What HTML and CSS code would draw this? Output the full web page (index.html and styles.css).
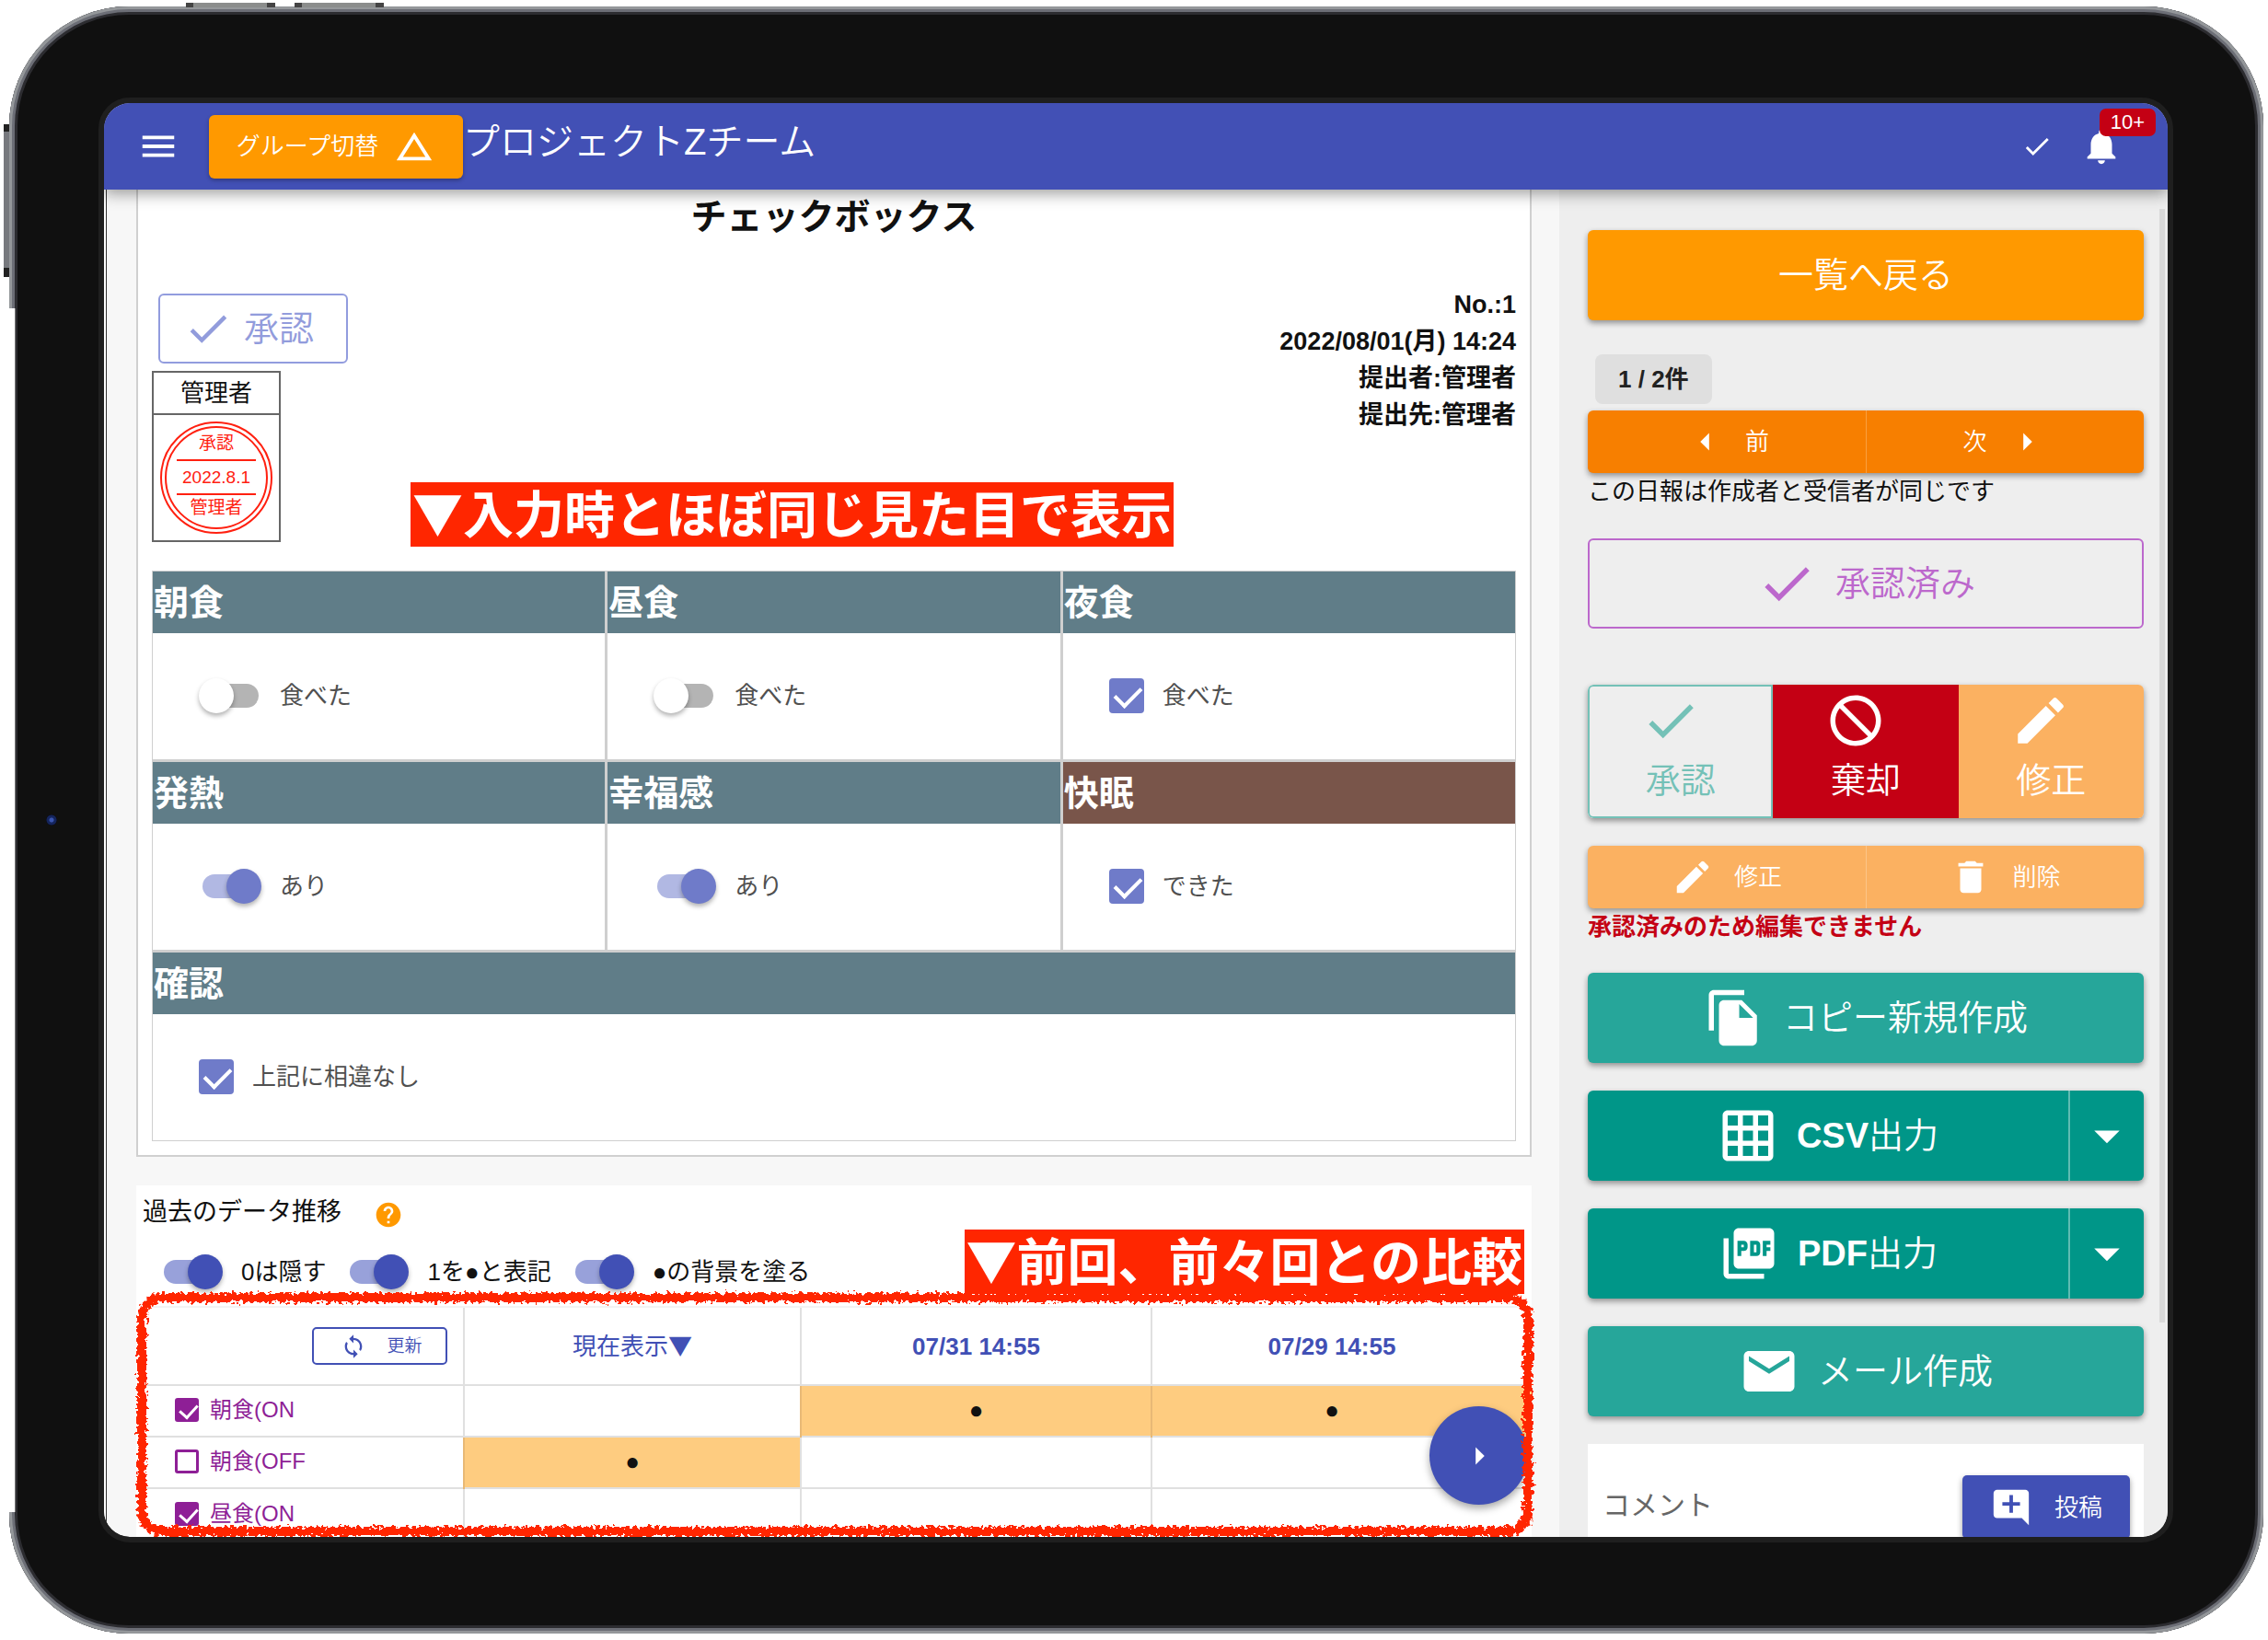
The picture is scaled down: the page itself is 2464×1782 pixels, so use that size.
FILE: index.html
```html
<!DOCTYPE html>
<html lang="ja">
<head>
<meta charset="utf-8">
<title>プロジェクトZチーム</title>
<link rel="stylesheet" href="styles.css">
</head>
<body>
<svg class="defs" width="0" height="0" aria-hidden="true">
  <symbol id="check" viewBox="0 0 24 24"><path d="M9 16.17L4.83 12l-1.42 1.41L9 19 21 7l-1.41-1.41z"/></symbol>
  <symbol id="pencil" viewBox="0 0 24 24"><path d="M3 17.25V21h3.75L17.81 9.94l-3.75-3.75L3 17.25zM20.71 7.04a1 1 0 0 0 0-1.41l-2.34-2.34a1 1 0 0 0-1.41 0l-1.83 1.83 3.75 3.75 1.83-1.83z"/></symbol>
  <symbol id="right" viewBox="0 0 24 24"><path d="M10 17l5-5-5-5z"/></symbol>
  <symbol id="left" viewBox="0 0 24 24"><path d="M14 7l-5 5 5 5z"/></symbol>
  <symbol id="down" viewBox="0 0 24 24"><path d="M7 10l5 5 5-5z"/></symbol>
</svg>
<div class="device">
  <span class="key key-top-a"></span><span class="key key-top-b"></span><span class="key key-side"></span>
  <span class="edge"></span><span class="camera"></span>
  <div class="screen">
    <header class="bar">
      <button class="icon-btn menu" aria-label="メニュー"><svg class="i46" viewBox="0 0 24 24"><path d="M3 18h18v-2H3v2zm0-5h18v-2H3v2zm0-7v2h18V6H3z"/></svg></button>
      <button class="group-btn">グループ切替<svg class="i46" viewBox="0 0 24 24"><path d="M12 7.77L18.39 18H5.61L12 7.77M12 4L2 20h20L12 4z"/></svg></button>
      <h1 class="team">プロジェクトZチーム</h1>
      <button class="icon-btn" aria-label="確認"><svg class="i34" viewBox="0 0 24 24"><use href="#check"/></svg></button>
      <button class="icon-btn bell" aria-label="通知"><svg class="i46" viewBox="0 0 24 24"><path d="M12 22c1.100 0 2-.9 2-2h-4c0 1.100.9 2 2 2zm6-6v-5c0-3.070-1.640-5.640-4.500-6.320V4c0-.83-.67-1.500-1.500-1.500s-1.500.67-1.500 1.500v.68C7.630 5.360 6 7.920 6 11v5l-2 2v1h16v-1l-2-2z"/></svg><span class="badge">10+</span></button>
    </header>
    <div class="content">
      <main class="main">
        <section class="sheet">
          <h2 class="sheet-title">チェックボックス</h2>
          <div class="sheet-head">
            <div class="approval">
              <button class="approve-btn"><svg class="i54" viewBox="0 0 24 24"><use href="#check"/></svg>承認</button>
              <div class="stamp-box">
                <div class="stamp-name">管理者</div>
                <div class="stamp"><div class="stamp-inner"><span>承認</span><span class="stamp-date">2022.8.1</span><span class="stamp-by">管理者</span></div></div>
              </div>
            </div>
            <div class="meta"><div>No.:1</div><div>2022/08/01(月) 14:24</div><div>提出者:管理者</div><div>提出先:管理者</div></div>
          </div>
          <div class="callout callout-sheet">▼入力時とほぼ同じ見た目で表示</div>
          <div class="fields">
            <div class="field"><h3>朝食</h3><label><input class="switch" type="checkbox">食べた</label></div>
            <div class="field"><h3>昼食</h3><label><input class="switch" type="checkbox">食べた</label></div>
            <div class="field"><h3>夜食</h3><label><input class="tick" type="checkbox" checked>食べた</label></div>
            <div class="field"><h3>発熱</h3><label><input class="switch" type="checkbox" checked>あり</label></div>
            <div class="field"><h3>幸福感</h3><label><input class="switch" type="checkbox" checked>あり</label></div>
            <div class="field"><h3 class="brown">快眠</h3><label><input class="tick" type="checkbox" checked>できた</label></div>
            <div class="field wide"><h3>確認</h3><label><input class="tick" type="checkbox" checked>上記に相違なし</label></div>
          </div>
        </section>
        <section class="history">
          <div class="history-title"><h2>過去のデータ推移</h2><button class="icon-btn help" aria-label="ヘルプ"><svg class="i32" viewBox="0 0 24 24"><path d="M12 2C6.480 2 2 6.480 2 12s4.480 10 10 10 10-4.480 10-10S17.520 2 12 2zm1 17h-2v-2h2v2zm2.070-7.750l-.9.92C13.450 12.900 13 13.500 13 15h-2v-.5c0-1.100.45-2.100 1.170-2.830l1.240-1.260c.37-.36.59-.86.59-1.410 0-1.100-.9-2-2-2s-2 .9-2 2H8c0-2.210 1.790-4 4-4s4 1.790 4 4c0 .88-.36 1.680-.93 2.250z"/></svg></button></div>
          <div class="options">
            <label><input class="switch strong" type="checkbox" checked>0は隠す</label>
            <label><input class="switch strong" type="checkbox" checked>1を●と表記</label>
            <label><input class="switch strong" type="checkbox" checked>●の背景を塗る</label>
          </div>
          <div class="compare">
            <table>
              <colgroup><col class="c-name"><col class="c-now"><col class="c-prev"><col></colgroup>
              <thead><tr>
                <th class="refresh"><button class="refresh-btn"><svg class="i28" viewBox="0 0 24 24"><path d="M12 4V1L8 5l4 4V6c3.310 0 6 2.690 6 6 0 1.010-.25 1.970-.7 2.800l1.460 1.460C19.540 15.030 20 13.570 20 12c0-4.420-3.580-8-8-8zm0 14c-3.310 0-6-2.690-6-6 0-1.010.25-1.970.7-2.800L5.240 7.740C4.460 8.970 4 10.430 4 12c0 4.420 3.580 8 8 8v3l4-4-4-4v3z"/></svg>更新</button></th>
                <th class="now">現在表示<span class="mark">▼</span></th><th>07/31 14:55</th><th>07/29 14:55</th>
              </tr></thead>
              <tbody>
                <tr><td><label class="series"><input type="checkbox" checked>朝食(ON</label></td><td></td><td class="hit">●</td><td class="hit">●</td></tr>
                <tr><td><label class="series"><input type="checkbox">朝食(OFF</label></td><td class="hit">●</td><td></td><td></td></tr>
                <tr><td><label class="series"><input type="checkbox" checked>昼食(ON</label></td><td></td><td></td><td></td></tr>
              </tbody>
            </table>
            <button class="fab" aria-label="次へ"><svg class="i46" viewBox="0 0 24 24"><use href="#right"/></svg></button>
          </div>
          <div class="callout callout-history">▼前回、前々回との比較</div>
          <svg class="crayon" aria-hidden="true"><filter id="rough" x="-5%" y="-5%" width="110%" height="110%"><feTurbulence type="fractalNoise" baseFrequency="0.25" numOctaves="2" seed="4"/><feDisplacementMap in="SourceGraphic" scale="11" xChannelSelector="R" yChannelSelector="G"/></filter><rect x="6" y="6" rx="22" filter="url(#rough)"/></svg>
        </section>
      </main>
      <aside class="side">
        <button class="btn back">一覧へ戻る</button>
        <div class="count">1 / 2件</div>
        <div class="pair pager"><button><svg class="i46" viewBox="0 0 24 24"><use href="#left"/></svg>前</button><button>次<svg class="i46" viewBox="0 0 24 24"><use href="#right"/></svg></button></div>
        <p class="note">この日報は作成者と受信者が同じです</p>
        <button class="btn done"><svg class="i66" viewBox="0 0 24 24"><use href="#check"/></svg>承認済み</button>
        <div class="triple">
          <button class="ok"><svg class="i66" viewBox="0 0 24 24"><use href="#check"/></svg>承認</button>
          <button class="reject"><svg class="i66" viewBox="0 0 24 24"><path d="M12 2C6.480 2 2 6.480 2 12s4.480 10 10 10 10-4.480 10-10S17.520 2 12 2zM4 12c0-4.420 3.580-8 8-8 1.850 0 3.550.63 4.900 1.690L5.690 16.900C4.630 15.550 4 13.850 4 12zm8 8c-1.850 0-3.550-.63-4.900-1.690L18.310 7.100C19.370 8.450 20 10.150 20 12c0 4.420-3.580 8-8 8z" transform="matrix(-1 0 0 1 24 0)"/></svg>棄却</button>
          <button class="fix"><svg class="i66" viewBox="0 0 24 24"><use href="#pencil"/></svg>修正</button>
        </div>
        <div class="pair edit"><button><svg class="i46" viewBox="0 0 24 24"><use href="#pencil"/></svg>修正</button><button><svg class="i46" viewBox="0 0 24 24"><path d="M6 19c0 1.100.9 2 2 2h8c1.100 0 2-.9 2-2V7H6v12zM19 4h-3.500l-1-1h-5l-1 1H5v2h14V4z"/></svg>削除</button></div>
        <p class="note warn">承認済みのため編集できません</p>
        <div class="outputs">
          <button class="btn teal"><svg class="i66" viewBox="0 0 24 24"><path d="M16 1H4c-1.100 0-2 .9-2 2v14h2V3h12V1zm-1 4l6 6v10c0 1.100-.9 2-2 2H7.990C6.890 23 6 22.100 6 21l.01-14c0-1.100.89-2 1.990-2h7zm-1 7h5.500L14 6.500V12z"/></svg>コピー新規作成</button>
          <div class="split"><button class="btn"><svg class="i66" viewBox="0 0 24 24"><path d="M20 2H4c-1.100 0-2 .9-2 2v16c0 1.100.9 2 2 2h16c1.100 0 2-.9 2-2V4c0-1.100-.9-2-2-2zM8 20H4v-4h4v4zm0-6H4v-4h4v4zm0-6H4V4h4v4zm6 12h-4v-4h4v4zm0-6h-4v-4h4v4zm0-6h-4V4h4v4zm6 12h-4v-4h4v4zm0-6h-4v-4h4v4zm0-6h-4V4h4v4z"/></svg><span><b>CSV</b>出力</span></button><button class="more" aria-label="CSV出力メニュー"><svg class="i66" viewBox="0 0 24 24"><use href="#down"/></svg></button></div>
          <div class="split"><button class="btn"><svg class="i66" viewBox="0 0 24 24"><path d="M20 2H8c-1.100 0-2 .9-2 2v12c0 1.100.9 2 2 2h12c1.100 0 2-.9 2-2V4c0-1.100-.9-2-2-2zm-8.500 7.500c0 .83-.67 1.500-1.500 1.500H9v2H7.500V7H10c.83 0 1.500.67 1.500 1.500v1zm5 2c0 .83-.67 1.500-1.500 1.500h-2.500V7H15c.83 0 1.500.67 1.500 1.500v3zm4-3H19v1h1.500V11H19v2h-1.500V7h3v1.500zM9 9.500h1v-1H9v1zM4 6H2v14c0 1.100.9 2 2 2h14v-2H4V6zm10 5.500h1v-3h-1v3z"/></svg><span><b>PDF</b>出力</span></button><button class="more" aria-label="PDF出力メニュー"><svg class="i66" viewBox="0 0 24 24"><use href="#down"/></svg></button></div>
          <button class="btn teal"><svg class="i66" viewBox="0 0 24 24"><path d="M20 4H4c-1.100 0-1.990.9-1.990 2L2 18c0 1.100.9 2 2 2h16c1.100 0 2-.9 2-2V6c0-1.100-.9-2-2-2zm0 4l-8 5-8-5V6l8 5 8-5v2z"/></svg>メール作成</button>
          <div class="comment"><span>コメント</span><button class="post"><svg class="i46" viewBox="0 0 24 24"><path d="M21.990 4c0-1.100-.89-2-1.990-2H4c-1.100 0-2 .9-2 2v12c0 1.100.9 2 2 2h14l4 4-.01-18zM17 11h-4v4h-2v-4H7V9h4V5h2v4h4v2z"/></svg>投稿</button></div>
        </div>
      </aside>
      <span class="scrollbar"></span>
    </div>
  </div>
</div>
</body>
</html>
```
FILE: styles.css
```css
* { box-sizing: border-box; }
html, body { height: 100%; }
body {
  margin: 0;
  padding: 7px 5px 7px 10px;
  background: #fff;
  color: #111;
  font: 26px/40px "Liberation Sans", "Noto Sans CJK JP", sans-serif;
  overflow: hidden;
}
h1, h2, h3, p { margin: 0; font-weight: 400; }
button {
  margin: 0;
  padding: 0;
  border: 0;
  background: none;
  color: inherit;
  font: inherit;
  font-weight: 350;
  display: flex;
  align-items: center;
  justify-content: center;
}
b { font-weight: 700; }
input { appearance: none; margin: 0; flex: none; position: relative; }
svg { fill: currentColor; flex: none; display: block; }
.defs { position: absolute; }
.i28 { width: 28px; height: 28px; }
.i32 { width: 32px; height: 32px; }
.i34 { width: 34px; height: 34px; }
.i46 { width: 46px; height: 46px; }
.i54 { width: 54px; height: 54px; }
.i66 { width: 66px; height: 66px; }

/* tablet body */
.device {
  position: relative;
  height: 100%;
  padding: 105px 104px 105px 103px;
  border-radius: 130px;
  background: #101010;
  box-shadow: inset 0 0 0 3px #94979a, inset 0 0 0 6px #6c6e76, inset 0 0 0 9px #2c2c30;
}
.key { position: absolute; background: linear-gradient(90deg, #444 0 8px, #8b8d8c 8px 88px, #444 88px); height: 5px; width: 97px; top: -4px; }
.key-top-a { left: 192px; }
.key-top-b { left: 310px; }
.key-side { left: -6px; top: 128px; width: 6px; height: 166px; background: linear-gradient(#222 0 8px, #77797e 8px 156px, #222 156px); }
.edge { position: absolute; left: 0; top: 328px; bottom: 132px; width: 7px; background: linear-gradient(90deg, #fff 0 6px, #777 6px); }
.camera { position: absolute; left: 40px; top: 50%; margin-top: -6px; width: 12px; height: 12px; border-radius: 50%; background: radial-gradient(#3a55b0 0 2px, #14245c 3px 5px, #0a0a12 6px); }
.screen {
  height: 100%;
  border-radius: 28px;
  overflow: hidden;
  background: #f7f7f7;
  display: flex;
  flex-direction: column;
  outline: 6px solid #1f1f1f;
}

/* app bar */
.bar {
  position: relative;
  z-index: 2;
  flex: none;
  height: 94px;
  padding: 0 49px 0 36px;
  display: flex;
  align-items: center;
  background: #4250b5;
  color: #fff;
  box-shadow: 0 4px 16px rgba(0, 0, 0, .4);
}
.group-btn {
  margin-left: 32px;
  width: 276px;
  height: 69px;
  gap: 16px;
  border-radius: 6px;
  background: #ff9900;
  box-shadow: 0 2px 4px rgba(0, 0, 0, .3);
}
.team { flex: 1; padding: 0 0 10px; font-size: 40px; font-weight: 350; }
.bell { position: relative; margin-left: 30px; }
.badge {
  position: absolute;
  left: 21px;
  top: -18px;
  width: 61px;
  height: 30px;
  border-radius: 7px;
  background: #c40014;
  font-size: 22px;
  line-height: 30px;
}

/* columns */
.content {
  position: relative;
  flex: 1;
  min-height: 0;
  display: grid;
  grid-template-columns: 1fr 661px;
  border-left: 2px solid #fff;
}
.main { padding: 0 30px 0 33px; min-width: 0; min-height: 0; box-shadow: inset 1px 0 #333; }
.sheet {
  position: relative;
  padding: 0 15px 15px;
  background: #fff;
  border: 2px solid #d0d0d0;
  border-top: 0;
}
.sheet-title { text-align: center; font-size: 39px; line-height: 60px; font-weight: 700; }
.sheet-head { display: flex; justify-content: space-between; margin-top: 45px; }
.approval { padding-top: 8px; }
.approve-btn {
  width: 206px;
  height: 76px;
  margin: 0 0 8px 7px;
  padding-right: 10px;
  gap: 12px;
  border: 2px solid #929cde;
  border-radius: 6px;
  color: #929cdc;
  font-size: 38px;
}
.stamp-box { width: 140px; height: 186px; border: 2px solid #666; }
.stamp-name { height: 46px; line-height: 44px; text-align: center; border-bottom: 2px solid #666; }
.stamp { width: 122px; height: 122px; margin: 7px; padding: 3px; border: 2px solid #ff2010; border-radius: 50%; color: #ff2010; }
.stamp-inner { height: 100%; padding: 0 11px; border: 2px solid #ff2010; border-radius: 50%; display: flex; flex-direction: column; text-align: center; font-size: 19px; line-height: 34px; }
.stamp-date { height: 39px; line-height: 35px; border: solid #ff2010; border-width: 2px 0; }
.stamp-by { line-height: 28px; }
.meta { text-align: right; font-weight: 700; font-size: 27px; }
.callout {
  position: absolute;
  padding: 0 2px 8px;
  background: #ff2600;
  color: #fff;
  font-family: "Noto Sans CJK JP", sans-serif;
  font-size: 55px;
  line-height: 62px;
  font-weight: 700;
  white-space: nowrap;
}
.callout-sheet { left: 296px; top: 318px; }
.callout-history { right: 8px; top: 48px; }
.fields {
  margin-top: 31px;
  display: grid;
  grid-template-columns: repeat(3, 1fr);
  gap: 3px;
  border: 1px solid #cfcfcf;
  background: #cfcfcf;
}
.field { background: #fff; }
.wide { grid-column: 1 / -1; }
.field h3 { padding: 1px 0 0 1px; background: #607d88; color: #fff; font-size: 38px; line-height: 66px; font-weight: 700; }
.field .brown { background: #79554a; }
.field label { height: 137px; padding: 0 0 2px 50px; display: flex; align-items: center; gap: 20px; color: #505050; }

/* switches and ticks */
.switch { width: 68px; height: 38px; --on: #6f7bc9; --track: #b1b8e3; }
.strong { --on: #4150b5; --track: #98a1da; }
.switch::before { content: ""; position: absolute; left: 4px; top: 6px; width: 61px; height: 26px; border-radius: 13px; background: #b4b4b4; }
.switch::after { content: ""; position: absolute; left: 0; top: 0; width: 38px; height: 38px; border-radius: 50%; background: #fff; box-shadow: 0 3px 5px rgba(0, 0, 0, .3); }
.switch:checked::before { background: var(--track); }
.switch:checked::after { left: 30px; background: var(--on); }
.tick { width: 38px; height: 38px; border-radius: 4px; background: #6f7bc9; }
.tick::after { content: ""; position: absolute; left: 12px; top: 3px; width: 13px; height: 24px; border: solid #fff; border-width: 0 4px 4px 0; transform: rotate(45deg); }

/* history */
.history { position: relative; margin-top: 31px; background: #fff; height: 420px; }
.history-title { display: flex; align-items: center; height: 64px; padding: 0 7px 6px; }
.history-title h2 { font-size: 27px; }
.help { color: #ff9900; margin: 6px 0 0 35px; }
.options { display: flex; gap: 22px; height: 60px; padding-left: 26px; align-items: center; }
.options label { display: flex; align-items: center; gap: 20px; }
.compare { position: relative; margin: 7px 0 0 8px; }
table { width: 100%; table-layout: fixed; border-collapse: collapse; }
.c-name { width: 348px; }
.c-now { width: 366px; }
.c-prev { width: 381px; }
th, td { padding: 0; height: 56px; border: 2px solid #e0e0e0; border-width: 2px 0 0 2px; text-align: center; }
th { height: 85px; color: #4150b5; border-top-color: #f3f3f3; }
.now { font-weight: 400; }
.mark { font-family: "Noto Sans CJK JP", sans-serif; line-height: 30px; }
th:first-child, td:first-child { border-left: 0; }
th:last-child, td:last-child { padding-right: 22px; }
td { line-height: 50px; padding-bottom: 2px; }
.hit { background: #fecc80; border-left-color: #e8b976; }
.refresh { padding-right: 17px; font-weight: 400; }
.refresh-btn { margin-left: auto; width: 147px; height: 41px; gap: 22px; padding-left: 4px; border: 2px solid #4150b5; border-radius: 5px; font-size: 19px; }
.series { display: flex; align-items: center; gap: 12px; padding-left: 34px; color: #8e1f96; font-size: 24px; }
.series input { width: 26px; height: 26px; border: 3px solid #8e1f96; border-radius: 3px; }
.series input:checked { background: #8e1f96; }
.series input:checked::after { content: ""; position: absolute; left: 6px; top: 0; width: 9px; height: 16px; border: solid #fff; border-width: 0 3px 3px 0; transform: rotate(42deg); }
.fab { position: absolute; right: 4px; top: 109px; width: 107px; height: 107px; border-radius: 50%; background: #4150b5; color: #fff; box-shadow: 0 4px 8px rgba(0, 0, 0, .35); }
.crayon { position: absolute; left: 0; top: 116px; width: 100%; height: 266px; overflow: visible; }
.crayon rect { width: calc(100% - 10px); height: 254px; fill: none; stroke: #ff2600; stroke-width: 10px; }

/* side actions */
.side { background: #eee; padding: 44px 26px 0 31px; min-height: 0; display: flex; flex-direction: column; }
.side > * { flex: none; }
.btn { width: 100%; height: 98px; gap: 20px; border-radius: 6px; color: #fff; font-size: 38px; box-shadow: 0 3px 6px rgba(0, 0, 0, .4); }
.back { background: #ff9900; }
.count { align-self: flex-start; margin: 37px 0 7px 8px; padding: 0 25px; border-radius: 8px; background: #dfdfdf; line-height: 54px; font-weight: 700; color: #222; }
.pair { display: grid; grid-template-columns: 1fr 1fr; height: 68px; border-radius: 6px; overflow: hidden; color: #fff; box-shadow: 0 3px 6px rgba(0, 0, 0, .4); }
.pair button + button { border-left: 1px solid rgba(255, 255, 255, .25); }
.pager { background: #f77f00; }
.pager button { gap: 20px; }
.side .done { margin: 31px 0 61px; border: 2px solid #bc68cc; background: none; color: #bc68cc; box-shadow: none; }
.triple { display: grid; grid-template-columns: repeat(3, 1fr); height: 145px; border-radius: 6px; overflow: hidden; font-size: 38px; color: #fff; box-shadow: 0 3px 6px rgba(0, 0, 0, .4); }
.triple button { flex-direction: column; gap: 12px; padding-bottom: 16px; }
.triple svg { margin-right: 22px; }
.ok { border: 2px solid #74c1b7; border-radius: 6px 0 0 6px; color: #74c1b7; }
.reject { background: #c40014; }
.fix { background: #fbb161; }
.edit { margin-top: 30px; background: #fbb161; }
.edit button { gap: 22px; }
.warn { color: #c40014; font-weight: 700; }
.outputs { margin-top: 30px; display: flex; flex-direction: column; gap: 30px; }
.outputs .teal { background: #26a69a; }
.split { display: grid; grid-template-columns: 1fr 82px; border-radius: 6px; background: #009688; color: #fff; box-shadow: 0 3px 6px rgba(0, 0, 0, .4); }
.split .btn { box-shadow: none; }
.more { border-left: 2px solid #5fbcb3; }
.comment { display: flex; justify-content: space-between; padding: 34px 15px 34px 16px; background: #fff; color: #666; font-size: 30px; line-height: 66px; }
.post { width: 182px; height: 69px; gap: 24px; border-radius: 5px; background: #4150b5; color: #fff; font-size: 26px; box-shadow: 0 3px 6px rgba(0, 0, 0, .4); }
.scrollbar { position: absolute; right: 3px; top: 21px; width: 6px; height: 1210px; background: #dadada; }
```
